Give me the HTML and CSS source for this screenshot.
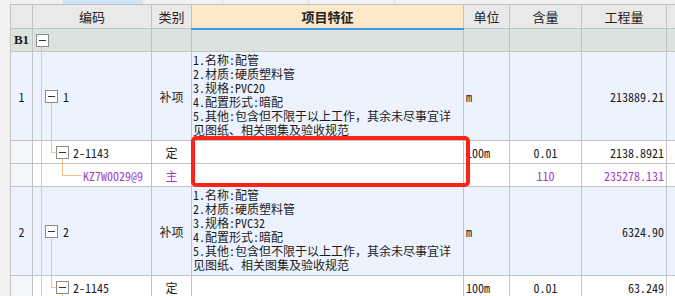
FILE: index.html
```html
<!DOCTYPE html>
<html lang="zh-CN">
<head>
  <meta charset="UTF-8" />
  <title>清单</title>
  <link rel="stylesheet" href="styles.css">
</head>
<body>
  <div class="topbar">
    <span class="seg w64"></span>
    <span class="seg w79 active"></span>
    <span class="seg w80"></span>
    <span class="seg w86"></span>
    <span class="seg w86"></span>
    <span class="seg rest"></span>
  </div>

  <div class="sheet">
    <table class="grid">
      <colgroup>
        <col class="c-idx">
        <col class="c-code">
        <col class="c-type">
        <col class="c-feat">
        <col class="c-unit">
        <col class="c-qty">
        <col class="c-total">
        <col class="c-pad">
      </colgroup>
      <thead>
        <tr>
          <th></th>
          <th>编码</th>
          <th>类别</th>
          <th class="feat-head">项目特征</th>
          <th>单位</th>
          <th>含量</th>
          <th>工程量</th>
          <th></th>
        </tr>
      </thead>
      <tbody>
        <tr class="group">
          <td class="idx b1">B1</td>
          <td class="code">
            <span class="ln v trunk"></span>
            <div class="node lv0"><span class="tbox"></span></div>
          </td>
          <td></td><td></td><td></td><td></td><td></td><td></td>
        </tr>

        <tr class="item">
          <td class="idx">1</td>
          <td class="code">
            <span class="ln v trunk"></span>
            <span class="ln v l1"></span>
            <div class="node lv1"><span class="tbox"></span><span>1</span></div>
          </td>
          <td class="center">补项</td>
          <td class="feat">
            <div>1.名称:配管</div>
            <div>2.材质:硬质塑料管</div>
            <div>3.规格:PVC20</div>
            <div>4.配置形式:暗配</div>
            <div>5.其他:包含但不限于以上工作，其余未尽事宜详见图纸、相关图集及验收规范</div>
          </td>
          <td class="unit">m</td>
          <td></td>
          <td class="num">213889.21</td>
          <td></td>
        </tr>

        <tr class="sub">
          <td class="idx"></td>
          <td class="code">
            <span class="ln v trunk"></span>
            <span class="ln v l1"></span>
            <span class="ln h h1"></span>
            <span class="ln v l2"></span>
            <div class="node lv2"><span class="tbox"></span><span>2-1143</span></div>
          </td>
          <td class="center">定</td>
          <td></td>
          <td class="unit">100m</td>
          <td class="center">0.01</td>
          <td class="num">2138.8921</td>
          <td></td>
        </tr>

        <tr class="mat">
          <td class="idx"></td>
          <td class="code">
            <span class="ln v trunk"></span>
            <span class="ln v l2"></span>
            <span class="ln h h2"></span>
            <div class="node lv3"><span>KZ7W0029@9</span></div>
          </td>
          <td class="center">主</td>
          <td></td>
          <td class="unit"></td>
          <td class="center">110</td>
          <td class="num">235278.131</td>
          <td></td>
        </tr>

        <tr class="item">
          <td class="idx">2</td>
          <td class="code">
            <span class="ln v trunk"></span>
            <span class="ln v l1"></span>
            <div class="node lv1"><span class="tbox"></span><span>2</span></div>
          </td>
          <td class="center">补项</td>
          <td class="feat">
            <div>1.名称:配管</div>
            <div>2.材质:硬质塑料管</div>
            <div>3.规格:PVC32</div>
            <div>4.配置形式:暗配</div>
            <div>5.其他:包含但不限于以上工作，其余未尽事宜详见图纸、相关图集及验收规范</div>
          </td>
          <td class="unit">m</td>
          <td></td>
          <td class="num">6324.90</td>
          <td></td>
        </tr>

        <tr class="sub">
          <td class="idx"></td>
          <td class="code">
            <span class="ln v trunk"></span>
            <span class="ln v l1"></span>
            <span class="ln h h1"></span>
            <span class="ln v l2"></span>
            <div class="node lv2"><span class="tbox"></span><span>2-1145</span></div>
          </td>
          <td class="center">定</td>
          <td></td>
          <td class="unit">100m</td>
          <td class="center">0.01</td>
          <td class="num">63.249</td>
          <td></td>
        </tr>
      </tbody>
    </table>

    <div class="highlight"></div>
  </div>
</body>
</html>
```

FILE: styles.css
```css
* {
  box-sizing: border-box;
  margin: 0;
  padding: 0;
}

body {
  background: #f4f6fa;
  font-family: "Noto Sans Mono CJK SC", "Noto Sans CJK SC", monospace;
  font-size: 12px;
  color: #1c1c1c;
  width: 675px;
  height: 296px;
  overflow: hidden;
}

/* thin strip of the panel above */
.topbar {
  display: flex;
  height: 4px;
  background: #f1f1f1;
}

.seg {
  height: 100%;
  border-right: 1px solid #dadada;
}

.seg.active {
  background: #cfe5f8;
}

.w64 { width: 64px; }
.w79 { width: 79px; }
.w80 { width: 80px; }
.w86 { width: 86px; }
.rest { flex: 1; border-right: none; }

.sheet {
  position: relative;
  padding-left: 10px;
  background: #f1f1f1;
}

.grid {
  border-collapse: collapse;
  table-layout: fixed;
  width: 676px;
  background: #fff;
}

.c-idx { width: 22px; }
.c-code { width: 119px; }
.c-type { width: 40px; }
.c-feat { width: 272px; }
.c-unit { width: 46px; }
.c-qty { width: 72px; }
.c-total { width: 85px; }
.c-pad { width: 20px; }

.grid th,
.grid td {
  border: 1px solid #c3c3c3;
  white-space: nowrap;
  overflow: hidden;
}

.grid th {
  height: 24px;
  background: #e9e9e9;
  font-family: "Noto Sans CJK SC", sans-serif;
  font-size: 13px;
  font-weight: normal;
  color: #222;
}

.grid th.feat-head {
  background: #fde8c9;
  font-weight: bold;
  border-bottom: 2px solid #3f96f0;
}

.grid td {
  vertical-align: middle;
}

.group td {
  height: 23px;
  background: #dae3de;
}

.item td {
  height: 89px;
  background: #edf3fe;
}

.sub td,
.mat td {
  height: 23px;
}

.idx {
  text-align: center;
  background: #f3f6fb;
}

.b1 {
  font-weight: bold;
  font-family: "Liberation Serif", "Noto Sans CJK SC", serif;
  font-size: 13px;
}

.center {
  text-align: center;
}

.unit {
  padding-left: 2px;
}

.num {
  text-align: right;
  padding-right: 2px;
}

.mat .center,
.mat .num,
.mat .node {
  color: #a23fc6;
}

.feat {
  vertical-align: top !important;
  white-space: normal !important;
  word-break: break-all;
  line-height: 14px;
  padding: 1px 5px 0 1px;
}

/* tree column */
.code {
  position: relative;
}

.node {
  display: flex;
  align-items: center;
  gap: 5px;
  position: relative;
}

.lv0 { padding-left: 3px; }
.lv1 { padding-left: 12px; }
.lv2 { padding-left: 23px; gap: 4px; }
.lv3 { padding-left: 50px; }

.tbox {
  width: 13px;
  height: 13px;
  border: 1px solid #8c8c8c;
  background: #fff;
  position: relative;
  flex: none;
}

.tbox::after {
  content: "";
  position: absolute;
  left: 2px;
  right: 2px;
  top: 5px;
  height: 1px;
  background: #333;
}

.ln {
  position: absolute;
  background: #ffc37e;
}

.ln.v { width: 1px; }
.ln.h { height: 1px; }

.trunk { left: 8px; top: 0; bottom: 0; }
.group .trunk { top: 18px; }

.item .l1 { left: 18px; top: 51px; bottom: 0; }

.sub .l1 { left: 18px; top: 0; height: 11px; }
.sub .h1 { left: 18px; top: 11px; width: 6px; }
.sub .l2 { left: 29px; top: 17px; bottom: 0; }

.mat .l2 { left: 29px; top: 0; height: 11px; }
.mat .h2 { left: 29px; top: 11px; width: 20px; }

/* red marker drawn over the sheet */
.highlight {
  position: absolute;
  left: 191px;
  top: 132px;
  width: 279px;
  height: 51px;
  border: 4px solid #ff2216;
  border-radius: 5px;
}
```
